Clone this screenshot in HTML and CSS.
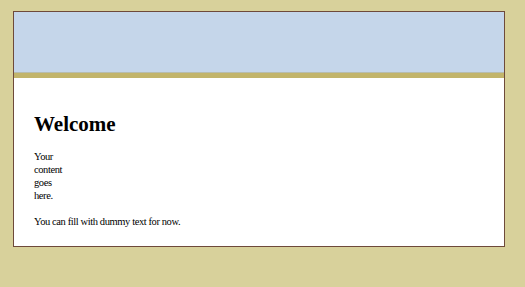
FILE: index.html
```html
<!DOCTYPE html>
<html lang="en">
<head>
  <meta charset="UTF-8" />
  <link rel="stylesheet" href="styles.css">
  <title>Welcome</title>
</head>
<body>
  <div class="page">
    <header class="banner"></header>
    <div class="stripe"></div>
    <main class="content">
      <h1>Welcome</h1>
      <p class="narrow">Your content goes here.</p>
      <p>You can fill with dummy text for now.</p>
    </main>
  </div>
</body>
</html>
```

FILE: styles.css
```css
body {
  margin: 0;
  background: #d8d19b;
  font-family: "Liberation Serif", "Times New Roman", serif;
  color: #000;
}
.page {
  width: 490px;
  margin: 11px 0 0 13px;
  border: 1px solid #6e4a3a;
  background: #fff;
}
.banner {
  height: 60px;
  background: #c5d6ea;
  border-bottom: 1px solid #b7bcae;
}
.stripe {
  height: 5px;
  background: #c2b46a;
}
.content {
  padding: 20px 20px 7px;
}
h1 {
  font-size: 21px;
  margin: 14px 0 0;
  line-height: 24px;
}
p {
  font-size: 10.5px;
  line-height: 13px;
  margin: 14px 0 11px;
  letter-spacing: -0.4px;
}
.narrow {
  width: 35px;
  margin-bottom: 13px;
}
.narrow + p {
  margin-top: 0;
}
```
